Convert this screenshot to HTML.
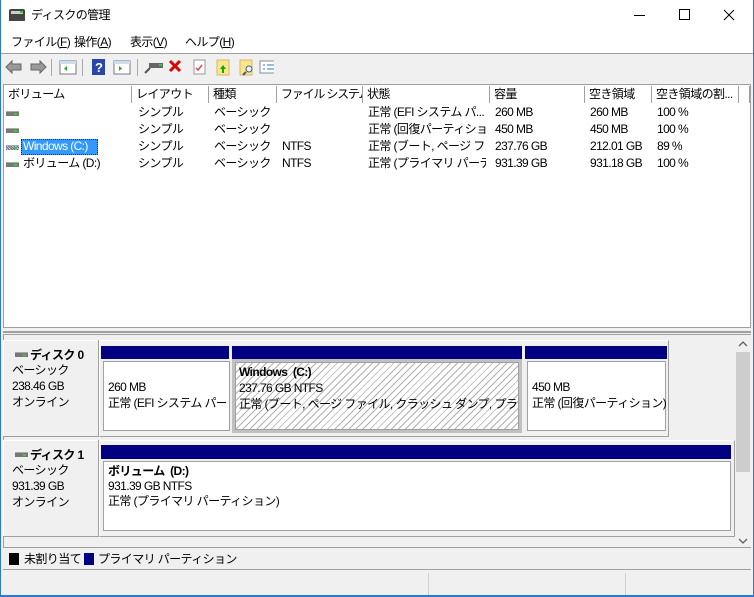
<!DOCTYPE html>
<html><head><meta charset="utf-8">
<style>
*{margin:0;padding:0;box-sizing:border-box}
body{width:754px;height:597px;overflow:hidden;background:#f0f0f0;font-family:"Liberation Sans","Noto Sans CJK JP",sans-serif;font-size:12px;color:#000;position:relative;letter-spacing:-0.6px}
.a{position:absolute}
.t{position:absolute;white-space:nowrap;line-height:17px}
.hdr{position:absolute;top:86px;height:17px;border-right:1px solid #a0a0a0;background:#fff;padding-left:4px;line-height:16px;white-space:nowrap;overflow:hidden}
.bar{position:absolute;background:#000080}
.box{position:absolute;background:#fff;border:1px solid #a0a0a0;box-shadow:inset 1px 1px 0 #fff}
.ico{position:absolute;width:13px;height:5px;background:#777;border-top:1px solid #aaa}
.ico:after{content:"";position:absolute;right:2px;top:1px;width:3px;height:2px;background:#3c3}
</style></head><body>
<div class="a" style="left:0;top:0;width:754px;height:597px;border:1px solid #2b79d0;border-top:0"></div>
<div class="a" style="left:1px;top:0;width:752px;height:53px;background:#fff"></div>
<div class="a" style="left:9px;top:9px;width:16px;height:12px;background:#444;border-radius:2px 2px 0 0"></div>
<div class="a" style="left:11px;top:11px;width:12px;height:3px;background:#ccc"></div>
<div class="a" style="left:20px;top:11px;width:3px;height:2px;background:#3c3"></div>
<div class="t" style="left:31px;top:7px;font-size:12px">ディスクの管理</div>
<div class="a" style="left:634px;top:15px;width:11px;height:1px;background:#000"></div>
<div class="a" style="left:679px;top:9px;width:11px;height:11px;border:1px solid #000"></div>
<svg class="a" style="left:723px;top:9px" width="12" height="12"><path d="M1 1L11 11M11 1L1 11" stroke="#000" stroke-width="1"/></svg>
<div class="t" style="left:11px;top:34px">ファイル(<u>F</u>)</div>
<div class="t" style="left:74px;top:34px">操作(<u>A</u>)</div>
<div class="t" style="left:130px;top:34px">表示(<u>V</u>)</div>
<div class="t" style="left:185px;top:34px">ヘルプ(<u>H</u>)</div>
<div class="a" style="left:1px;top:53px;width:752px;height:1px;background:#a0a0a0"></div>
<svg class="a" style="left:4px;top:58px" width="270" height="18">
<path d="M2 9L8 3V6H17V12H8V15Z" fill="#999" stroke="#666"/>
<path d="M42 9L36 3V6H27V12H36V15Z" fill="#999" stroke="#666"/>
<rect x="47" y="1" width="1" height="17" fill="#aaa"/>
<rect x="56" y="3" width="16" height="13" fill="#fff" stroke="#778"/><rect x="56" y="3" width="16" height="3" fill="#cde"/><path d="M63 8v5l-3-2.5z" fill="#2a2"/>
<rect x="78" y="1" width="1" height="17" fill="#aaa"/>
<rect x="88" y="1" width="13" height="16" fill="#2946a8"/><text x="91" y="14" fill="#fff" font-size="13" font-weight="bold" font-family="Liberation Sans">?</text>
<rect x="110" y="3" width="16" height="13" fill="#fff" stroke="#778"/><rect x="110" y="3" width="16" height="3" fill="#cde"/><path d="M115 8v5l3-2.5z" fill="#2a2"/>
<rect x="133" y="1" width="1" height="17" fill="#aaa"/>
<rect x="145" y="5" width="14" height="5" fill="#666"/><rect x="155" y="6" width="3" height="2" fill="#3c3"/><path d="M141 15l5-5" stroke="#555" stroke-width="2"/>
<path d="M166 3l10 10M176 3l-10 10" stroke="#d00" stroke-width="3"/>
<rect x="190" y="2" width="11" height="14" fill="#fff" stroke="#999"/><path d="M192 10l2 2 4-5" stroke="#e44" fill="none" stroke-width="1.5"/>
<rect x="213" y="2" width="12" height="15" fill="#ffe58a" stroke="#cb7"/><path d="M219 7l3 4h-2v4h-2v-4h-2z" fill="#1a1"/>
<rect x="236" y="2" width="12" height="15" fill="#ffe58a" stroke="#cb7"/><circle cx="245" cy="11" r="3" fill="#dff" stroke="#557"/><path d="M242 14l-3 3" stroke="#557" stroke-width="2"/>
<rect x="256" y="3" width="16" height="12" fill="#fff" stroke="#889"/><path d="M259 7h2M259 11h2M263 7h7M263 11h7" stroke="#27c"/>
</svg>
<div class="a" style="left:3px;top:84px;width:748px;height:244px;background:#fff;border:1px solid #a0a0a0"></div>
<div class="a" style="left:4px;top:102px;width:735px;height:1px;background:#e5e5e5"></div>
<div class="hdr" style="left:4px;width:128px">ボリューム</div>
<div class="hdr" style="left:132px;width:77px">レイアウト</div>
<div class="hdr" style="left:209px;width:68px">種類</div>
<div class="hdr" style="left:277px;width:86px;letter-spacing:-1.2px">ファイル システム</div>
<div class="hdr" style="left:363px;width:127px">状態</div>
<div class="hdr" style="left:490px;width:95px">容量</div>
<div class="hdr" style="left:585px;width:67px">空き領域</div>
<div class="hdr" style="left:652px;width:87px">空き領域の割...</div>
<div class="hdr" style="left:739px;width:11px"></div>
<div class="ico" style="left:6px;top:111px"></div>
<div class="ico" style="left:6px;top:128px"></div>
<div class="ico" style="left:6px;top:145px;background:repeating-linear-gradient(45deg,#668 0 1px,#ccd 1px 2px)"></div>
<div class="ico" style="left:6px;top:162px"></div>
<div class="a" style="left:21px;top:139px;width:77px;height:16px;background:#3399ff;border:1px dotted #036"></div>
<div class="t" style="left:23px;top:138px;color:#fff">Windows (C:)</div>
<div class="t" style="left:23px;top:155px">ボリューム (D:)</div>
<div class="t" style="left:138px;top:104px;line-height:17px">シンプル<br>シンプル<br>シンプル<br>シンプル</div>
<div class="t" style="left:214px;top:104px;line-height:17px">ベーシック<br>ベーシック<br>ベーシック<br>ベーシック</div>
<div class="t" style="left:282px;top:138px;line-height:17px">NTFS<br>NTFS</div>
<div class="t" style="left:368px;top:104px;line-height:17px;width:118px;overflow:hidden">正常 (EFI システム パ...<br>正常 (回復パーティション...<br>正常 (ブート, ページ フ...<br>正常 (プライマリ パーテ...</div>
<div class="t" style="left:495px;top:104px;line-height:17px">260 MB<br>450 MB<br>237.76 GB<br>931.39 GB</div>
<div class="t" style="left:590px;top:104px;line-height:17px">260 MB<br>450 MB<br>212.01 GB<br>931.18 GB</div>
<div class="t" style="left:657px;top:104px;line-height:17px">100 %<br>100 %<br>89 %<br>100 %</div>
<div class="a" style="left:3px;top:331px;width:748px;height:2px;background:#a0a0a0"></div>
<div class="a" style="left:3px;top:334px;width:748px;height:214px;background:#f0f0f0;border:1px solid #a0a0a0"></div>
<div class="a" style="left:735px;top:335px;width:16px;height:212px;background:#f0f0f0"></div>
<div class="a" style="left:736px;top:352px;width:14px;height:120px;background:#cdcdcd"></div>
<svg class="a" style="left:738px;top:340px" width="10" height="8"><path d="M1 6l4-4 4 4" stroke="#606060" fill="none" stroke-width="1.3"/></svg>
<svg class="a" style="left:738px;top:537px" width="10" height="8"><path d="M1 2l4 4 4-4" stroke="#606060" fill="none" stroke-width="1.3"/></svg>
<div class="a" style="left:3px;top:340px;width:96px;height:97px;border-right:1px solid #a0a0a0;border-bottom:1px solid #a0a0a0;box-shadow:inset 1px 1px 0 #fff"></div>
<div class="a" style="left:99px;top:340px;width:570px;height:97px;border-right:1px solid #a0a0a0;border-bottom:1px solid #a0a0a0;border-left:1px solid #fff;border-top:1px solid #fff"></div>
<div class="ico" style="left:15px;top:352px"></div>
<div class="t" style="left:30px;top:347px;font-weight:bold">ディスク 0</div>
<div class="t" style="left:12px;top:362px;line-height:16px">ベーシック<br>238.46 GB<br>オンライン</div>
<div class="bar" style="left:101px;top:346px;width:128px;height:13px"></div>
<div class="bar" style="left:232px;top:346px;width:290px;height:13px"></div>
<div class="bar" style="left:525px;top:346px;width:142px;height:13px"></div>
<div class="box" style="left:103px;top:361px;width:127px;height:70px"></div>
<div class="t" style="left:108px;top:379px;line-height:16px;width:118px;overflow:hidden">260 MB<br>正常 (EFI システム パーテ</div>
<div class="a" style="left:232px;top:359px;width:290px;height:74px;background:#c0c0c0"></div>
<div class="a" style="left:235px;top:362px;width:284px;height:68px;border:1px solid #a0a0a0;background:repeating-linear-gradient(-45deg,#fff 0 4px,#b0b0b0 4px 5px)"></div>
<div class="t" style="left:239px;top:364px;line-height:16px;width:278px;overflow:hidden"><b>Windows&nbsp; (C:)</b><br>237.76 GB NTFS<br>正常 (ブート, ページ ファイル, クラッシュ ダンプ, プライマリ パーテ</div>
<div class="box" style="left:527px;top:361px;width:139px;height:70px"></div>
<div class="t" style="left:532px;top:379px;line-height:16px">450 MB<br>正常 (回復パーティション)</div>
<div class="a" style="left:3px;top:440px;width:96px;height:97px;border-right:1px solid #a0a0a0;border-bottom:1px solid #a0a0a0;box-shadow:inset 1px 1px 0 #fff"></div>
<div class="a" style="left:99px;top:440px;width:636px;height:97px;border-right:1px solid #a0a0a0;border-bottom:1px solid #a0a0a0;border-left:1px solid #fff;border-top:1px solid #fff"></div>
<div class="ico" style="left:15px;top:452px"></div>
<div class="t" style="left:30px;top:447px;font-weight:bold">ディスク 1</div>
<div class="t" style="left:12px;top:462px;line-height:16px">ベーシック<br>931.39 GB<br>オンライン</div>
<div class="bar" style="left:101px;top:445px;width:630px;height:14px"></div>
<div class="box" style="left:103px;top:461px;width:628px;height:70px"></div>
<div class="t" style="left:108px;top:464px;line-height:15px"><b>ボリューム&nbsp; (D:)</b><br>931.39 GB NTFS<br>正常 (プライマリ パーティション)</div>
<div class="a" style="left:3px;top:548px;width:748px;height:22px;border-bottom:1px solid #a0a0a0"></div>
<div class="a" style="left:9px;top:553px;width:10px;height:12px;background:#000"></div>
<div class="t" style="left:24px;top:551px">未割り当て</div>
<div class="a" style="left:84px;top:553px;width:10px;height:12px;background:#000080"></div>
<div class="t" style="left:98px;top:551px">プライマリ パーティション</div>
<div class="a" style="left:428px;top:573px;width:1px;height:22px;background:#d0d0d0"></div>
<div class="a" style="left:625px;top:573px;width:1px;height:22px;background:#d0d0d0"></div>
<div class="a" style="left:1px;top:595px;width:752px;height:2px;background:#2b79d0"></div>
</body></html>
